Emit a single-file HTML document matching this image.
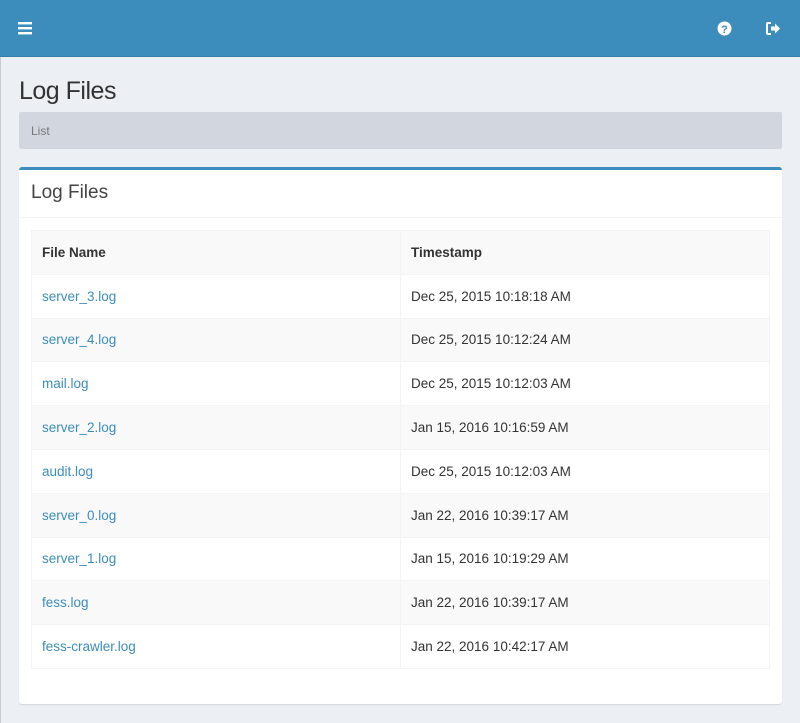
<!DOCTYPE html>
<html><head><style>
*{box-sizing:border-box;margin:0;padding:0}
body{width:800px;height:723px;background:#ecf0f5;font-family:"Liberation Sans",sans-serif;color:#333;position:relative;overflow:hidden}
.ln{position:absolute;left:0;top:57px;width:1px;height:666px;background:#c7ccd3}
.nav{position:absolute;left:0;top:0;width:800px;height:57px;background:#3c8dbc;border-bottom:1px solid #367fa9}
h1{position:absolute;left:19px;top:77px;font-size:25px;font-weight:normal;color:#333;letter-spacing:-0.5px}
.bc{position:absolute;left:19px;top:112px;width:763px;height:37px;background:#d2d6de;border-radius:2px;font-size:12px;color:#777;padding:12px 12px}
.box{position:absolute;left:19px;top:167px;width:763px;height:537px;background:#fff;border-top:3px solid #3c8dbc;border-radius:3px;box-shadow:0 1px 1px rgba(0,0,0,.1)}
.bh{height:48px;border-bottom:1px solid #f4f4f4;font-size:19px;padding:12px 12px;color:#444}
table{position:absolute;left:12px;top:60px;width:739px;border-collapse:collapse;border:1px solid #f4f4f4;font-size:13.5px}
td,th{height:43.8px;border:1px solid #f4f4f4;padding:0 10px;text-align:left;vertical-align:middle}
th{font-weight:bold;font-size:13.5px}
td:first-child,th:first-child{width:369px}
tr:nth-child(odd){background:#f9f9f9}
a{color:#3c8dbc;text-decoration:none}
</style></head><body>
<div class="nav">
<svg style="position:absolute;left:18px;top:21px" width="15" height="14"><rect y="1" width="14" height="2.4" fill="#fff"/><rect y="6" width="14" height="2.4" fill="#fff"/><rect y="11" width="14" height="2.4" fill="#fff"/></svg>
<svg style="position:absolute;left:717px;top:21px" width="15" height="15"><circle cx="7.5" cy="7.5" r="7" fill="#fff"/><text x="7.5" y="12" text-anchor="middle" font-family="Liberation Sans" font-weight="bold" font-size="11" fill="#3c8dbc">?</text></svg>
<svg style="position:absolute;left:766px;top:22px" width="15" height="13"><path d="M5 1H2Q1 1 1 2V11Q1 12 2 12H5" stroke="#fff" stroke-width="2" fill="none"/><path d="M5 4.5H9V1.5L14 6.5L9 11.5V8.5H5Z" fill="#fff"/></svg>
</div>
<div class="ln"></div>
<h1>Log Files</h1>
<div class="bc">List</div>
<div class="box">
<div class="bh">Log Files</div>
<table>
<tr><th>File Name</th><th>Timestamp</th></tr>
<tr><td><a>server_3.log</a></td><td>Dec 25, 2015 10:18:18 AM</td></tr>
<tr><td><a>server_4.log</a></td><td>Dec 25, 2015 10:12:24 AM</td></tr>
<tr><td><a>mail.log</a></td><td>Dec 25, 2015 10:12:03 AM</td></tr>
<tr><td><a>server_2.log</a></td><td>Jan 15, 2016 10:16:59 AM</td></tr>
<tr><td><a>audit.log</a></td><td>Dec 25, 2015 10:12:03 AM</td></tr>
<tr><td><a>server_0.log</a></td><td>Jan 22, 2016 10:39:17 AM</td></tr>
<tr><td><a>server_1.log</a></td><td>Jan 15, 2016 10:19:29 AM</td></tr>
<tr><td><a>fess.log</a></td><td>Jan 22, 2016 10:39:17 AM</td></tr>
<tr><td><a>fess-crawler.log</a></td><td>Jan 22, 2016 10:42:17 AM</td></tr>
</table>
</div>
</body></html>
